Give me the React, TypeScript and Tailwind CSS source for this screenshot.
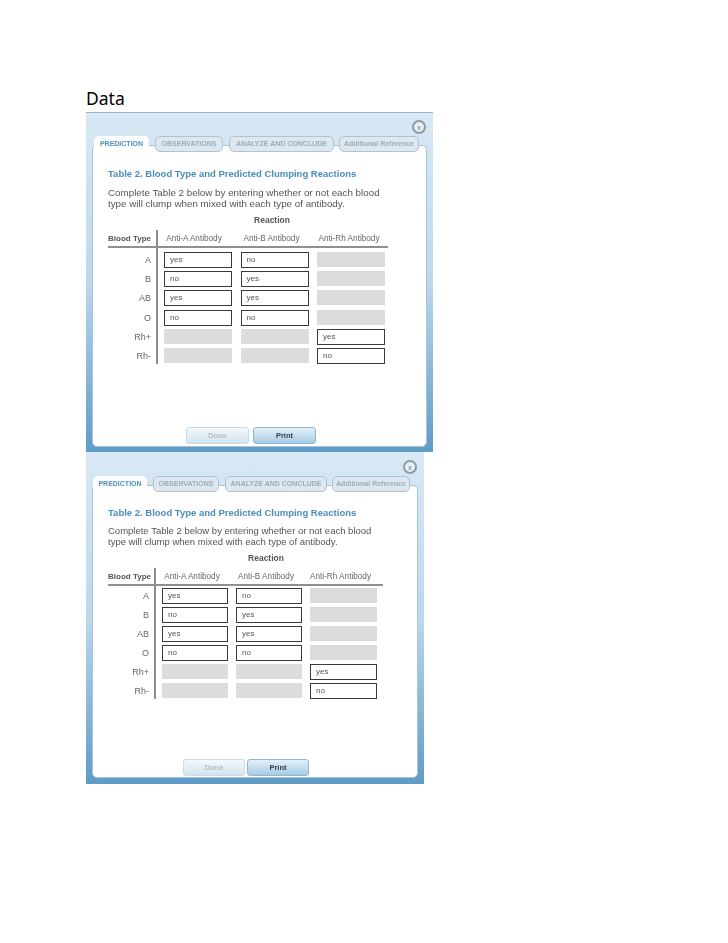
const big = {
  panel: 'w-[347px] h-[340px] px-[6px] pb-[5px] pt-[7px] border-t border-[#a7b4bd]',
  closeRow: 'pr-[1px]',
  tabs: ['w-[55px] mr-[6px]', 'w-[68px] mr-[6px]', 'w-[105px] mr-[5px]', 'w-[80px]'],
  tabRow: 'mt-[2px] pl-[2px]',
  body: 'pt-[22px] pl-[15px]',
  intro: 'mt-[8px] w-[280px] text-[9.8px]',
  reaction: 'mt-[6px] w-[328px]',
  table: 'mt-[5px]',
  rowTop: 'mt-[4px]',
  rows: 'gap-y-[3.2px] grid-cols-[68px_68px_68px] gap-x-[8.5px] ml-[6px]',
  labelCol: 'w-[50px]',
  labelGap: 'gap-y-[3.2px] mt-[4px]',
  head: 'gap-x-[9.5px] w-[230px] pl-[2px] grid-cols-[68px_68px_68px]',
  buttons: 'pl-[93px] pb-[2px] gap-[4px]',
  button: 'w-[63px]',
}

const small = {
  panel: 'w-[338px] h-[332px] px-[6px] pb-[6px] pt-[8px]',
  closeRow: 'pr-[1px]',
  tabs: ['w-[54px] mr-[6px]', 'w-[66px] mr-[6px]', 'w-[102px] mr-[5px]', 'w-[78px]'],
  tabRow: 'mt-[2px] pl-[1px]',
  body: 'pt-[21px] pl-[15px]',
  intro: 'mt-[7px] w-[280px] text-[9.5px]',
  reaction: 'mt-[6px] w-[316px]',
  table: 'mt-[5px]',
  rowTop: 'mt-[2px]',
  rows: 'gap-y-[3px] grid-cols-[66px_66px_67px] gap-x-[8px] ml-[6px]',
  labelCol: 'w-[48px]',
  labelGap: 'gap-y-[3px] mt-[2px]',
  head: 'gap-x-[8px] w-[227px] pl-[3px] grid-cols-[66px_66px_67px]',
  buttons: 'pl-[90px] pb-[1px] gap-[2px]',
  button: 'w-[62px]',
}

const tabNames = ['PREDICTION', 'OBSERVATIONS', 'ANALYZE AND CONCLUDE', 'Additional Reference']
const bloodTypes = ['A', 'B', 'AB', 'O', 'Rh+', 'Rh-']
const answers = [
  ['yes', 'no', null],
  ['no', 'yes', null],
  ['yes', 'yes', null],
  ['no', 'no', null],
  [null, null, 'yes'],
  [null, null, 'no'],
]

function Panel({ v }: { v: typeof big }) {
  return (
    <div className={`flex flex-col bg-gradient-to-b from-[#d9e9f5] via-[#bcd8ec] to-[#5f9bc6] ${v.panel}`}>
      {/* Close */}
      <div className={`flex justify-end ${v.closeRow}`}>
        <div className="flex h-[14px] w-[14px] items-center justify-center rounded-full border-2 border-[#8e9aa3] bg-[#e6f0f7] text-[7px] leading-none text-[#777]">
          x
        </div>
      </div>

      {/* Tabs */}
      <div className={`relative z-10 flex h-[16px] ${v.tabRow}`}>
        {tabNames.map((name, i) => (
          <div
            key={name}
            className={
              i === 0
                ? `flex items-center justify-center rounded-t-[5px] bg-white text-[7px] font-bold whitespace-nowrap text-[#4f8fbb] ${v.tabs[i]}`
                : `flex items-center justify-center rounded-[5px] border-[1.5px] border-[#b4c2cd] bg-[#dce8f1] text-[7px] font-bold whitespace-nowrap text-[#a3aab0] ${v.tabs[i]}`
            }
          >
            {name}
          </div>
        ))}
      </div>

      {/* White sheet */}
      <div className="-mt-[7px] flex flex-1 flex-col rounded-[5px] border border-[#a9c4d8] bg-white">
        <div className={`flex flex-1 flex-col ${v.body}`}>
          <div className="text-[9.5px] leading-[12px] font-bold whitespace-nowrap text-[#4b8db8]">
            Table 2. Blood Type and Predicted Clumping Reactions
          </div>
          <div className={`leading-[10.5px] text-[#555] ${v.intro}`}>
            Complete Table 2 below by entering whether or not each blood type will clump when mixed with each type of antibody.
          </div>
          <div className={`text-center text-[8.5px] leading-[10px] font-bold text-[#555] ${v.reaction}`}>Reaction</div>

          <div className={`flex ${v.table}`}>
            {/* Blood type column */}
            <div className={`border-r-2 border-[#8f8f8f] ${v.labelCol}`}>
              <div className="flex h-[18px] items-end border-b-2 border-[#8f8f8f] pb-[1px] text-[8px] font-bold whitespace-nowrap text-[#555]">
                Blood Type
              </div>
              <div className={`grid pr-[5px] text-right text-[9px] text-[#666] ${v.labelGap}`}>
                {bloodTypes.map((t) => (
                  <div key={t} className="h-[16px] leading-[16px]">
                    {t}
                  </div>
                ))}
              </div>
            </div>

            {/* Antibody columns */}
            <div>
              <div className="flex h-[18px] items-end border-b-2 border-[#8f8f8f] pb-[1px]">
                <div className={`grid text-center text-[8.2px] whitespace-nowrap text-[#666] ${v.head}`}>
                  <div>Anti-A Antibody</div>
                  <div>Anti-B Antibody</div>
                  <div>Anti-Rh Antibody</div>
                </div>
              </div>
              <div className={`grid ${v.rowTop} ${v.rows}`}>
                {answers.flat().map((a, i) =>
                  a ? (
                    <div key={i} className="h-[16px] border-[1.5px] border-[#3a3a3a] bg-white pl-[5px] text-[8px] leading-[13px] text-[#555]">
                      {a}
                    </div>
                  ) : (
                    <div key={i} className="h-[15px] bg-[#dcdcdc]" />
                  ),
                )}
              </div>
            </div>
          </div>
        </div>

        {/* Buttons */}
        <div className={`flex ${v.buttons}`}>
          <div className={`flex h-[17px] items-center justify-center rounded-[3px] border border-[#c9dbe6] bg-gradient-to-b from-[#f3f8fb] to-[#d3e5f0] text-[7.5px] font-bold text-[#b3bcc2] ${v.button}`}>
            Done
          </div>
          <div className={`flex h-[17px] items-center justify-center rounded-[3px] border border-[#8fb8d3] bg-gradient-to-b from-[#e4f0f8] to-[#a6cbe4] text-[7.5px] font-bold text-[#33414c] ${v.button}`}>
            Print
          </div>
        </div>
      </div>
    </div>
  )
}

export default function App() {
  return (
    <div className="min-h-[943px] bg-white pt-[86px] pl-[86px] font-['Liberation_Sans',Arial,sans-serif]">
      <div className="h-[26px] font-['Noto_Sans',sans-serif] text-[17.5px] leading-[25px] text-black">Data</div>
      <div className="blur-[0.4px]">
        <Panel v={big} />
        <Panel v={small} />
      </div>
    </div>
  )
}
